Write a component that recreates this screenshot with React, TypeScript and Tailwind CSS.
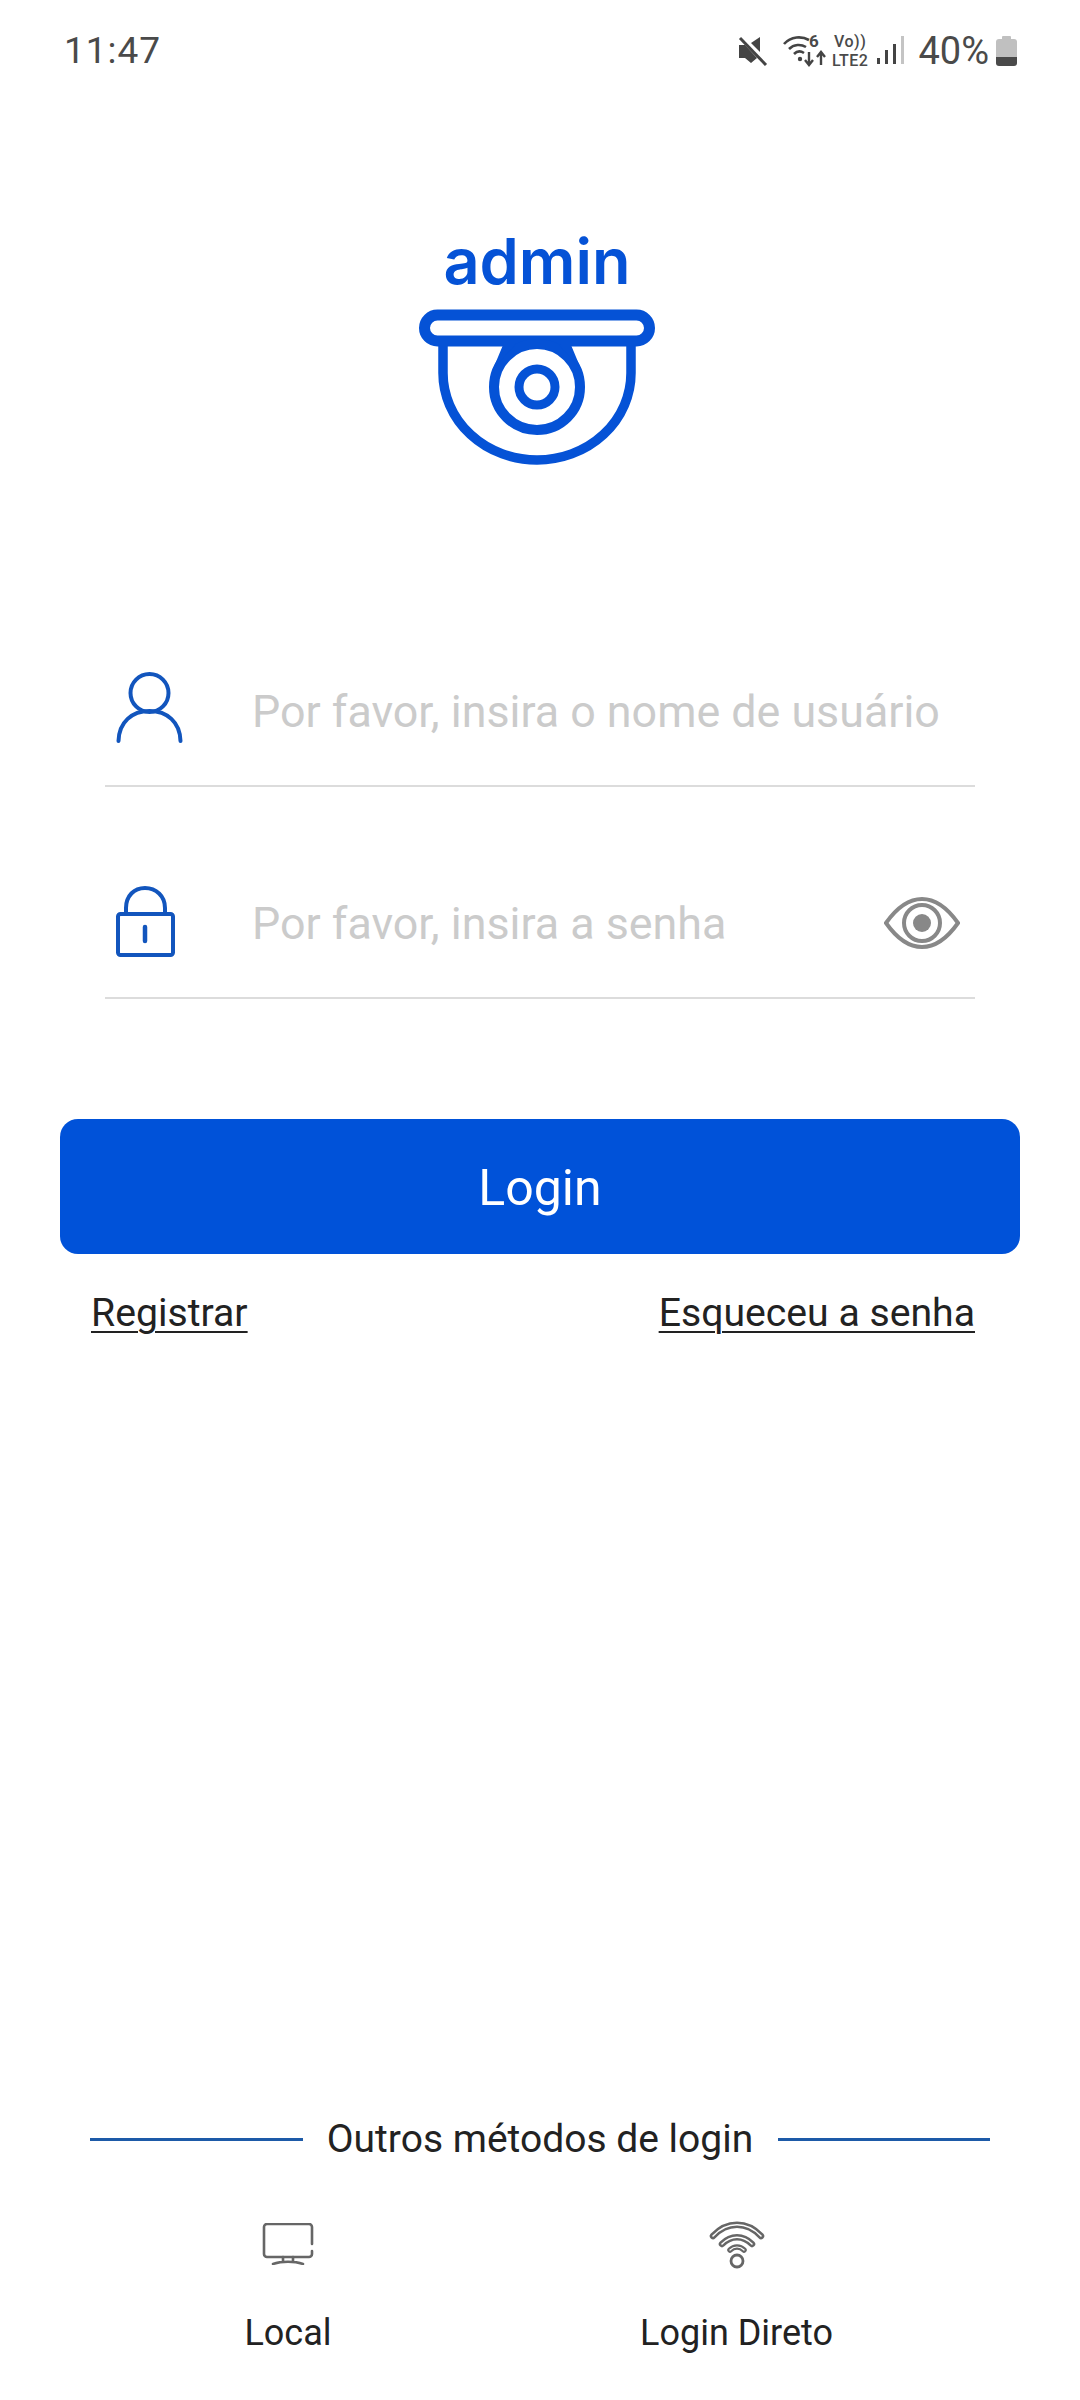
import React from "react";

const BLUE = "#0552d6";

function MuteIcon() {
  return (
    <svg width="30" height="30" viewBox="0 0 30 30" className="block">
      <path d="M13 7l9-6v15z" fill="#444" />
      <path d="M2 2l26 27" stroke="#444" strokeWidth="3" fill="none" />
      <path d="M1 9h6l12 13-6 5-6-5H1z" fill="#444" />
    </svg>
  );
}

function WifiIcon() {
  return (
    <svg width="46" height="32" viewBox="0 0 46 32" className="block">
      <g fill="none" stroke="#444" strokeWidth="2.6">
        <path d="M1 9C8 1 19 1 26 5" />
        <path d="M6 14c5-5 12-5 17-2" />
        <path d="M11 19c3-3 7-3 10-1" />
      </g>
      <circle cx="17" cy="24" r="2.2" fill="#444" />
      <path d="M26 17v12M22 25l4 5 4-5" fill="none" stroke="#444" strokeWidth="2.4" />
      <path d="M38 30V18M34 22l4-5 4 5" fill="none" stroke="#444" strokeWidth="2.4" />
    </svg>
  );
}

function SignalIcon() {
  return (
    <svg width="28" height="30" viewBox="0 0 28 30" className="block">
      <rect x="0" y="22" width="3" height="6" fill="#444" />
      <rect x="8" y="14" width="3" height="14" fill="#444" />
      <rect x="16" y="8" width="3" height="20" fill="#444" />
      <rect x="24" y="0" width="3" height="28" fill="#c4c4c4" />
    </svg>
  );
}

function BatteryIcon() {
  return (
    <svg width="21" height="30" viewBox="0 0 21 30" className="block">
      <rect x="6" y="0" width="9" height="5" rx="1" fill="#c0c0c0" />
      <path d="M3 3h15a3 3 0 0 1 3 3v15H0V6a3 3 0 0 1 3-3z" fill="#c0c0c0" />
      <path d="M0 21h21v6a3 3 0 0 1-3 3H3a3 3 0 0 1-3-3z" fill="#4a4a4a" />
    </svg>
  );
}

function CameraDome() {
  return (
    <svg width="240" height="156" viewBox="0 0 240 156" className="block">
      <g fill="none" stroke={BLUE}>
        <rect x="7.5" y="6" width="225" height="26" rx="13" strokeWidth="11" />
        <path d="M26 36v28a94 87 0 0 0 188 0V36" strokeWidth="9.5" />
        <circle cx="120" cy="78" r="43" strokeWidth="10" />
        <circle cx="120" cy="78" r="18" strokeWidth="9" />
      </g>
      {/* short struts tying the lens ring to the mounting plate */}
      <path d="M86 36h12L76 60zM154 36h-12l22 24z" fill={BLUE} />
    </svg>
  );
}

function UserIcon() {
  return (
    <svg width="67" height="72" viewBox="0 0 67 72" className="block">
      <g fill="none" stroke="#1255bd" strokeWidth="4" strokeLinecap="round">
        <circle cx="33.5" cy="21" r="19" />
        <path d="M2.5 69C3 50 16 39 33.5 39S64 50 64.500 69" />
      </g>
    </svg>
  );
}

function LockIcon() {
  return (
    <svg width="60" height="72" viewBox="0 0 60 72" className="block">
      <g fill="none" stroke="#1255bd" strokeWidth="4" strokeLinejoin="round">
        <rect x="2" y="28" width="55" height="41" rx="2.500" />
        <path d="M10 28v-6C10 10 18 2 29 2s20 8 20 20v6" />
        <path d="M29 41v14" strokeWidth="4.500" strokeLinecap="round" />
      </g>
    </svg>
  );
}

function EyeIcon() {
  return (
    <svg width="76" height="52" viewBox="0 0 76 52" className="block">
      <g fill="none" stroke="#888" strokeWidth="4">
        <path d="M2 26C14 9 26 2 38 2s24 7 36 24C62 43 50 50 38 50S14 43 2 26z" />
        <circle cx="38" cy="26" r="18" />
      </g>
      <circle cx="38" cy="26" r="9" fill="#888" />
    </svg>
  );
}

function MonitorIcon() {
  return (
    <svg width="52" height="42" viewBox="0 0 52 42" className="block">
      <g fill="none" stroke="#666" strokeWidth="2.600" strokeLinecap="round">
        <path d="M50 21V4a3 3 0 0 0-3-3H5a3 3 0 0 0-3 3v27a3 3 0 0 0 3 3h42a3 3 0 0 0 3-3v-3" />
        <path d="M21 34v4M31 34v4M11 41c8-3 22-3 30 0" />
      </g>
    </svg>
  );
}

function WifiLoginIcon() {
  return (
    <svg width="56" height="50" viewBox="0 0 56 50" className="block">
      <g fill="none" stroke="#666" strokeLinecap="round">
        <path d="M4 16C18 1 38 1 52 16" strokeWidth="6.500" />
        <path d="M13 24c9-9 21-9 30 0" strokeWidth="6.500" />
        <path d="M21 30c4-4 10-4 14 0" strokeWidth="5.500" />
      </g>
      <g fill="none" stroke="#fff" strokeLinecap="round">
        <path d="M4 16C18 1 38 1 52 16" strokeWidth="1.600" />
        <path d="M13 24c9-9 21-9 30 0" strokeWidth="1.600" />
        <path d="M21 30c4-4 10-4 14 0" strokeWidth="1.200" />
      </g>
      <circle cx="28" cy="41" r="6" fill="none" stroke="#666" strokeWidth="2.800" />
    </svg>
  );
}

export default function App() {
  return (
    <div className="w-[1080px] h-[2400px] bg-white flex flex-col font-[Roboto,sans-serif] text-[#222]">
      <header className="h-[100px] flex items-start justify-between pl-[64px] pr-[63px] pt-[29px] text-[#4a4a4a]">
        <span className="text-[37px] leading-[44px] tracking-[1px]">11:47</span>
        <div className="flex items-center h-[44px]">
          <MuteIcon />
          <div className="relative ml-[15px]">
            <WifiIcon />
            <span className="absolute left-[26px] top-[-3px] text-[17px] leading-[18px] font-bold">6</span>
          </div>
          <div className="ml-[3px] flex flex-col items-center text-[16px] leading-[19px] font-medium tracking-[0.5px]">
            <span>Vo))</span>
            <span>LTE2</span>
          </div>
          <div className="ml-[9px]">
            <SignalIcon />
          </div>
          <span className="ml-[13px] text-[38px] leading-[44px]">40%</span>
          <div className="ml-[7px]">
            <BatteryIcon />
          </div>
        </div>
      </header>

      <div className="flex flex-col items-center pr-[6px] mt-[125px]">
        <span className="text-[63px] leading-[72px] font-semibold font-[Inter,sans-serif] text-[#0552d6]">admin</span>
        <div className="mt-[12px]">
          <CameraDome />
        </div>
      </div>

      <div className="ml-[105px] w-[870px] mt-[181px]">
        <div className="h-[141px] flex items-start border-b-[2px] border-[#dcdcdc] pt-[26px]">
          <div className="ml-[11px] w-[136px] shrink-0">
            <UserIcon />
          </div>
          <input
            readOnly
            placeholder="Por favor, insira o nome de usuário"
            className="mt-[3px] w-[720px] h-[72px] bg-transparent outline-none text-[44.8px] placeholder:text-[#cbcbcb]"
          />
        </div>
        <div className="h-[141px] mt-[71px] flex items-start border-b-[2px] border-[#dcdcdc] pt-[26px]">
          <div className="ml-[11px] w-[136px] shrink-0 pt-[2px]">
            <LockIcon />
          </div>
          <input
            readOnly
            placeholder="Por favor, insira a senha"
            className="mt-[3px] w-[621px] h-[72px] bg-transparent outline-none text-[44.8px] placeholder:text-[#cbcbcb]"
          />
          <div className="ml-[11px] mt-[13px]">
            <EyeIcon />
          </div>
        </div>
      </div>

      <button className="ml-[60px] w-[960px] h-[135px] mt-[120px] rounded-[18px] bg-[#0052d9] text-white text-[50px] font-normal flex items-center justify-center pt-[3px]">
        Login
      </button>

      <div className="ml-[91px] w-[884px] mt-[36px] flex justify-between text-[39.2px] leading-[46px] text-[#222]">
        <a className="underline decoration-2 underline-offset-[5px]">Registrar</a>
        <a className="underline decoration-2 underline-offset-[5px]">Esqueceu a senha</a>
      </div>

      <footer className="mt-auto pb-[45px]">
        <div className="flex items-center ml-[90px] w-[900px]">
          <div className="w-[213px] h-[3px] bg-[#1d5aa8]" />
          <span className="w-[474px] text-center text-[39px] leading-[46px] mr-[1px]">Outros métodos de login</span>
          <div className="w-[212px] h-[3px] bg-[#1d5aa8]" />
        </div>
        <div className="mt-[61px] flex">
          <div className="ml-[188px] w-[200px] flex flex-col items-center">
            <MonitorIcon />
            <span className="mt-[46px] text-[36px] leading-[44px]">Local</span>
          </div>
          <div className="ml-[186px] w-[325px] flex flex-col items-center">
            <div className="mt-[-3px]">
              <WifiLoginIcon />
            </div>
            <span className="mt-[41px] text-[36px] leading-[44px]">Login Direto</span>
          </div>
        </div>
      </footer>
    </div>
  );
}
